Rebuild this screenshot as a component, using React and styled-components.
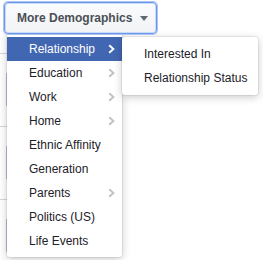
import React from "react";
import styled, { createGlobalStyle } from "styled-components";

const Global = createGlobalStyle`
  html, body { margin: 0; padding: 0; background: #ffffff; }
  body { font-family: "Liberation Sans", Arial, sans-serif; -webkit-font-smoothing: antialiased; }
`;

const Page = styled.div`
  position: relative;
  width: 263px;
  height: 260px;
  overflow: hidden;
  padding: 2px 0 0 4px;
  box-sizing: border-box;
`;

const Button = styled.button`
  position: relative;
  z-index: 4;
  display: flex;
  align-items: center;
  gap: 8px;
  box-sizing: border-box;
  width: 153px;
  height: 32px;
  padding: 0 0 0 12px;
  border: 1px solid #6d97e8;
  border-radius: 4px;
  box-shadow: 0 0 0 1px #a9c3f3, inset 0 0 0 1px #c9d9f8;
  background: linear-gradient(#fafbfc, #f2f3f5);
  color: #4b4f56;
  font-family: "Liberation Sans", Arial, sans-serif;
  font-size: 12px;
  font-weight: bold;
  cursor: pointer;
`;

const Caret = styled.span`
  width: 0;
  height: 0;
  border-left: 4.5px solid transparent;
  border-right: 4.5px solid transparent;
  border-top: 5px solid #606770;
  margin-top: 1px;
`;

const Backdrop = styled.div`
  display: flex;
  flex-direction: column;
  width: 8px;
  margin: 19px 0 0 -4px;
`;

const BackRow = styled.div`
  height: 73px;
  border-top: 1px solid #d5d7db;
  box-sizing: border-box;
  padding: 19px 0 0 6px;
`;

const Accent = styled.div`
  width: 1px;
  height: 33px;
  background: #b8c2da;
`;

const Menu = styled.ul`
  position: absolute;
  left: 7px;
  top: 32px;
  width: 115px;
  margin: 0;
  padding: 5px 0 4px;
  list-style: none;
  background: #ffffff;
  border-radius: 3px;
  box-shadow: 0 2px 8px rgba(0, 0, 0, 0.22), 0 0 0 1px rgba(0, 0, 0, 0.06);
  box-sizing: border-box;
  z-index: 2;
`;

const Item = styled.li`
  display: flex;
  align-items: center;
  justify-content: space-between;
  height: 24px;
  padding: 0 7px 0 22px;
  font-size: 12px;
  color: ${(p) => (p.$active ? "#ffffff" : "#1d2129")};
  background: ${(p) => (p.$active ? "#4267b2" : "transparent")};
  white-space: nowrap;
`;

const Sub = styled.ul`
  position: absolute;
  left: 122px;
  top: 37px;
  width: 136px;
  margin: 0;
  padding: 5px 0 5px;
  list-style: none;
  background: #ffffff;
  border-radius: 3px;
  box-shadow: 0 2px 8px rgba(0, 0, 0, 0.22), 0 0 0 1px rgba(0, 0, 0, 0.06);
  box-sizing: border-box;
  z-index: 3;
`;

const SubItem = styled.li`
  display: flex;
  align-items: center;
  height: 24px;
  padding-left: 22px;
  font-size: 12px;
  color: #1d2129;
  white-space: nowrap;
`;

const Chevron = ({ active }) => (
  <svg width="7" height="10" viewBox="0 0 7 10">
    <path
      d="M1.2 1.2 L5.4 5 L1.2 8.8"
      fill="none"
      stroke={active ? "#ffffff" : "#bec3c9"}
      strokeWidth="1.9"
    />
  </svg>
);

const items = [
  { label: "Relationship", sub: true, active: true },
  { label: "Education", sub: true },
  { label: "Work", sub: true },
  { label: "Home", sub: true },
  { label: "Ethnic Affinity" },
  { label: "Generation" },
  { label: "Parents", sub: true },
  { label: "Politics (US)" },
  { label: "Life Events" },
];

export default function App() {
  return (
    <>
      <Global />
      <Page>
        <Button>
          More Demographics
          <Caret />
        </Button>
        <Backdrop>
          {[0, 1, 2].map((i) => (
            <BackRow key={i}>
              <Accent />
            </BackRow>
          ))}
        </Backdrop>
        <Menu>
          {items.map((it) => (
            <Item key={it.label} $active={it.active}>
              <span>{it.label}</span>
              {it.sub && <Chevron active={it.active} />}
            </Item>
          ))}
        </Menu>
        <Sub>
          <SubItem>Interested In</SubItem>
          <SubItem>Relationship Status</SubItem>
        </Sub>
      </Page>
    </>
  );
}
